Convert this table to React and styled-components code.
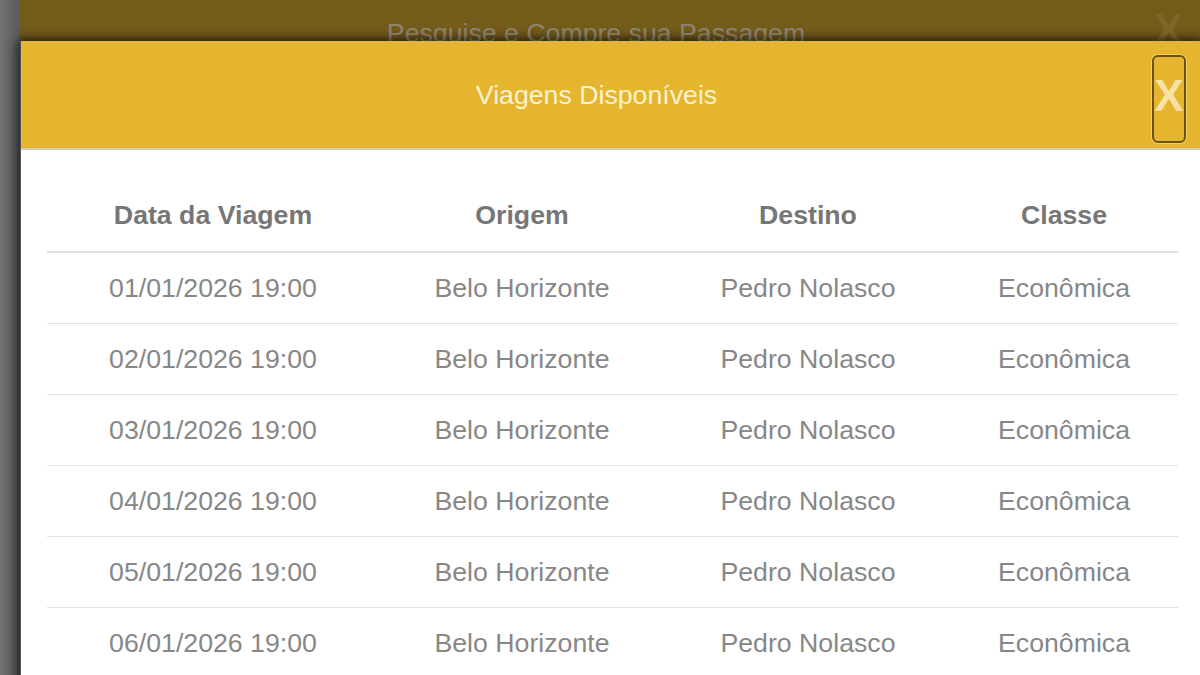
import React from "react";
import styled, { createGlobalStyle } from "styled-components";

const Global = createGlobalStyle`
  html, body { margin: 0; padding: 0; overflow: hidden; }
  body { font-family: "Liberation Sans", Arial, sans-serif; }
`;

const Page = styled.div`
  position: relative;
  width: 1200px;
  height: 675px;
  overflow: hidden;
  background: linear-gradient(to right, #737373 0px, #666 10px, #5a5a5a 20px);
  display: flex;
`;

const BackPanel = styled.div`
  margin-left: 20px;
  flex: 1;
  display: flex;
  flex-direction: column;
`;

const BackHeader = styled.div`
  height: 80px;
  background: linear-gradient(to bottom, #735b1a 0px, #735b1a 28px, #66501a 41px);
  display: flex;
  justify-content: center;
  position: relative;
`;

const BackTitle = styled.div`
  padding-top: 18px;
  margin-right: 28px;
  font-size: 26.7px;
  line-height: 30px;
  color: #8d8470;
`;

const BackClose = styled.span`
  position: absolute;
  right: 17px;
  top: 0px;
  font-size: 44px;
  line-height: 60px;
  font-weight: bold;
  color: #7c6727;
`;

const Modal = styled.div`
  position: absolute;
  left: 20px;
  top: 41px;
  width: 1184px;
  height: 700px;
  background: #fff;
  border-left: 1px solid #555;
  box-sizing: border-box;
  box-shadow: -5px 0 10px rgba(0, 0, 0, 0.45), 0 -3px 6px rgba(0, 0, 0, 0.3);
`;

const ModalHeader = styled.div`
  height: 109px;
  background: #e5b530;
  border-top: 1px solid #d9b64e;
  border-bottom: 2px solid #d2cbb8;
  box-sizing: border-box;
  display: flex;
  align-items: center;
  justify-content: center;
  position: relative;
`;

const ModalTitle = styled.h4`
  margin: 0 32px 0 0;
  font-size: 26.7px;
  font-weight: normal;
  color: #fdf2cf;
`;

const CloseButton = styled.button`
  position: absolute;
  right: 18px;
  top: 13px;
  width: 34px;
  height: 88px;
  padding: 0 0 6px 0;
  border: 2px solid #6d5312;
  border-radius: 6px;
  box-shadow: 0 0 0 1px #f0cf6a;
  background: transparent;
  color: #f7e2a4;
  font-family: "Liberation Sans", Arial, sans-serif;
  font-size: 44px;
  font-weight: bold;
  line-height: 1;
  display: flex;
  align-items: center;
  justify-content: center;
`;

const Body = styled.div`
  padding: 0 26px;
`;

const Row = styled.div`
  display: grid;
  grid-template-columns: 332px 286px 286px 226px;
  border-bottom: ${(p) => (p.$head ? "2px solid #dedede" : "1px solid #e2e2e2")};
  height: ${(p) => (p.$head ? "101px" : "70px")};
  align-items: ${(p) => (p.$head ? "end" : "center")};
  box-sizing: content-box;
`;

const Cell = styled.div`
  text-align: center;
  font-size: 26.7px;
  line-height: 30px;
  color: ${(p) => (p.$head ? "#767676" : "#878787")};
  font-weight: ${(p) => (p.$head ? "bold" : "normal")};
  padding-bottom: ${(p) => (p.$head ? "21px" : "0")};
`;

const trips = ["01", "02", "03", "04", "05", "06"].map((d) => ({
  date: `${d}/01/2026 19:00`,
  origem: "Belo Horizonte",
  destino: "Pedro Nolasco",
  classe: "Econômica",
}));

export default function App() {
  return (
    <>
      <Global />
      <Page>
        <BackPanel>
          <BackHeader>
            <BackTitle>Pesquise e Compre sua Passagem</BackTitle>
            <BackClose>X</BackClose>
          </BackHeader>
        </BackPanel>
        <Modal>
          <ModalHeader>
            <ModalTitle>Viagens Disponíveis</ModalTitle>
            <CloseButton>X</CloseButton>
          </ModalHeader>
          <Body>
            <Row $head>
              <Cell $head>Data da Viagem</Cell>
              <Cell $head>Origem</Cell>
              <Cell $head>Destino</Cell>
              <Cell $head>Classe</Cell>
            </Row>
            {trips.map((t) => (
              <Row key={t.date}>
                <Cell>{t.date}</Cell>
                <Cell>{t.origem}</Cell>
                <Cell>{t.destino}</Cell>
                <Cell>{t.classe}</Cell>
              </Row>
            ))}
          </Body>
        </Modal>
      </Page>
    </>
  );
}
